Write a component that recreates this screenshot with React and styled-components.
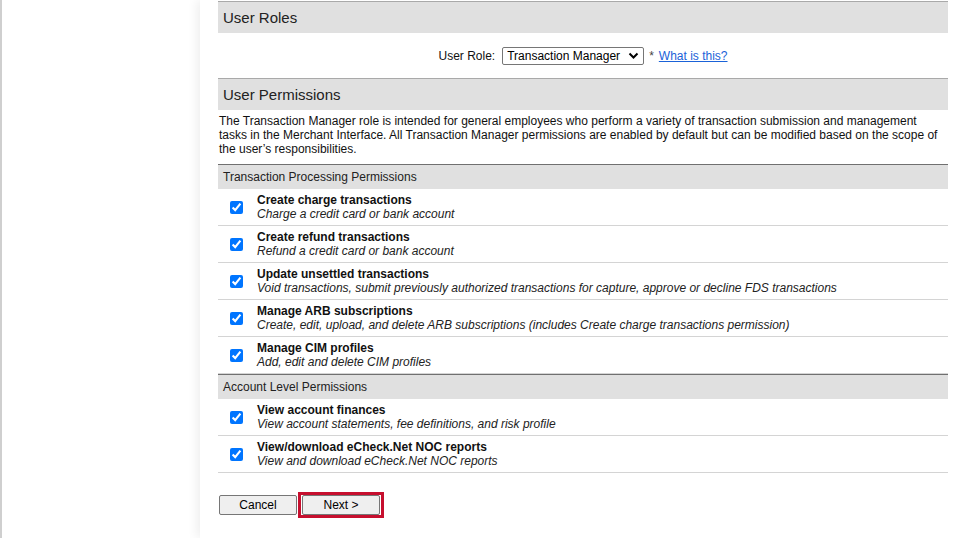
import React from 'react';
import styled, { createGlobalStyle } from 'styled-components';

const GlobalStyle = createGlobalStyle`
  html, body {
    margin: 0;
    padding: 0;
    background: #fff;
    font-family: Arial, "Liberation Sans", sans-serif;
    color: #111;
  }
`;

const Page = styled.div`
  display: flex;
  min-height: 538px;
  width: 960px;
  overflow: hidden;
`;

const Sidebar = styled.div`
  width: 198px;
  flex: none;
  border-left: 2px solid #cfcfcf;
  background: #fff;
`;

const Main = styled.div`
  flex: 1;
  background: #fff;
  box-shadow: -3px 0 10px rgba(0, 0, 0, 0.07);
  padding: 1px 12px 20px 18px;
`;

const SectionHeader = styled.div`
  border-top: 1px solid #a9a9a9;
  background: #e0e0e0;
  height: 31px;
  display: flex;
  align-items: center;
  padding-left: 5px;
  font-size: 15px;
  color: #222;
`;

const RoleRow = styled.div`
  height: 45px;
  display: flex;
  align-items: center;
  justify-content: center;
  font-size: 12px;
`;

const Label = styled.label`
  margin-right: 7px;
`;

// native arrow replaced so the full option text fits like the reference
const SelectWrap = styled.span`
  position: relative;
  display: inline-flex;
`;

const Select = styled.select`
  appearance: none;
  font-family: Arial, "Liberation Sans", sans-serif;
  font-size: 12px;
  height: 18px;
  width: 142px;
  padding: 0 0 0 4px;
  border: 1px solid #767676;
  border-radius: 2px;
  background: #fff;
  color: #000;
`;

const Chevron = styled.svg`
  position: absolute;
  right: 5px;
  top: 5px;
  pointer-events: none;
`;

const Required = styled.span`
  margin: 0 5px 0 5px;
  color: #444;
  font-size: 12px;
`;

const Link = styled.a`
  color: #1a62d8;
  text-decoration: underline;
  font-size: 12px;
`;

const Description = styled.p`
  margin: 4px 0 8px 1px;
  font-size: 12px;
  line-height: 14px;
  color: #111;
`;

const GroupHeader = styled.div`
  border-top: 1px solid #707070;
  background: #e0e0e0;
  height: 24px;
  display: flex;
  align-items: center;
  padding-left: 5px;
  font-size: 12px;
  color: #222;
`;

const PermRow = styled.div`
  height: 36px;
  border-bottom: 1px solid #d4d4d4;
  display: flex;
  align-items: center;
`;

const Check = styled.input`
  width: 13px;
  height: 13px;
  margin: 0 14px 0 12px;
  accent-color: #0075ff;
`;

const PermText = styled.div`
  display: flex;
  flex-direction: column;
  font-size: 12px;
  line-height: 14px;
  margin-top: -1px;
`;

const PermTitle = styled.span`
  font-weight: bold;
  color: #111;
`;

const PermDesc = styled.span`
  font-style: italic;
  color: #222;
`;

const Buttons = styled.div`
  display: flex;
  align-items: center;
  margin-top: 19px;
  padding-left: 1px;
`;

const Button = styled.button`
  font-family: Arial, "Liberation Sans", sans-serif;
  font-size: 12px;
  width: 78px;
  height: 20px;
  background: #efefef;
  border: 1px solid #767676;
  border-radius: 2px;
  color: #000;
  padding: 0;
`;

const Highlight = styled.span`
  display: inline-flex;
  border: 3px solid #c60f2e;
  padding: 0 1px;
  margin-left: 1px;
`;

const transactionPerms = [
  ['Create charge transactions', 'Charge a credit card or bank account'],
  ['Create refund transactions', 'Refund a credit card or bank account'],
  [
    'Update unsettled transactions',
    'Void transactions, submit previously authorized transactions for capture, approve or decline FDS transactions',
  ],
  [
    'Manage ARB subscriptions',
    'Create, edit, upload, and delete ARB subscriptions (includes Create charge transactions permission)',
  ],
  ['Manage CIM profiles', 'Add, edit and delete CIM profiles'],
];

const accountPerms = [
  ['View account finances', 'View account statements, fee definitions, and risk profile'],
  ['View/download eCheck.Net NOC reports', 'View and download eCheck.Net NOC reports'],
];

const Permission = ({ title, desc }) => (
  <PermRow>
    <Check type="checkbox" defaultChecked />
    <PermText>
      <PermTitle>{title}</PermTitle>
      <PermDesc>{desc}</PermDesc>
    </PermText>
  </PermRow>
);

const App = () => {
  return (
    <Page>
      <GlobalStyle />
      <Sidebar />
      <Main>
        <SectionHeader>User Roles</SectionHeader>
        <RoleRow>
          <Label>User Role:</Label>
          <SelectWrap>
            <Select defaultValue="tm">
              <option value="tm">Transaction Manager</option>
              <option value="acc">Account Analyst</option>
              <option value="adm">Account Owner</option>
            </Select>
            <Chevron width="11" height="8" viewBox="0 0 11 8">
              <path d="M1.5 1.5 L5.5 5.5 L9.5 1.5" fill="none" stroke="#000" strokeWidth="2" />
            </Chevron>
          </SelectWrap>
          <Required>*</Required>
          <Link href="#">What is this?</Link>
        </RoleRow>

        <SectionHeader>User Permissions</SectionHeader>
        <Description>
          The Transaction Manager role is intended for general employees who perform a variety of
          transaction submission and management tasks in the Merchant Interface. All Transaction
          Manager permissions are enabled by default but can be modified based on the scope of the
          user’s responsibilities.
        </Description>

        <GroupHeader>Transaction Processing Permissions</GroupHeader>
        {transactionPerms.map(([t, d]) => (
          <Permission key={t} title={t} desc={d} />
        ))}

        <GroupHeader>Account Level Permissions</GroupHeader>
        {accountPerms.map(([t, d]) => (
          <Permission key={t} title={t} desc={d} />
        ))}

        <Buttons>
          <Button>Cancel</Button>
          <Highlight>
            <Button>Next &gt;</Button>
          </Highlight>
        </Buttons>
      </Main>
    </Page>
  );
};

export default App;
